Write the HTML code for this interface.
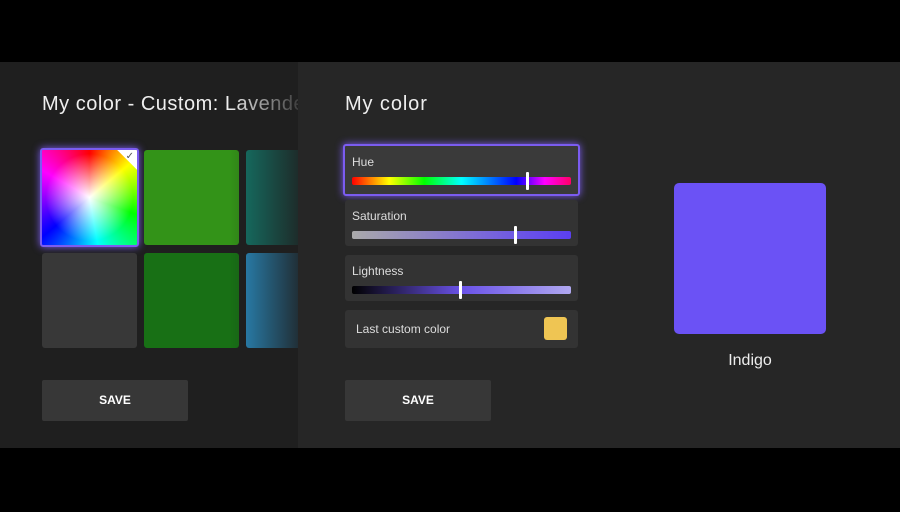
<html><head><style>
body{margin:0;width:900px;height:512px;background:#000;position:relative;overflow:hidden;font-family:"Liberation Sans","DejaVu Sans",sans-serif;color:#eee}
.a{position:absolute}
.t{border-radius:3px}
.box{position:absolute;left:345px;width:233px;background:#333;border-radius:3px}
.box span{position:absolute;left:7px;top:9px;font-size:12px;color:#ddd}
.bar{position:absolute;left:7px;right:7px;height:8px;border-radius:2px}
.th{position:absolute;width:3px;height:18px;background:#fff;border-radius:1px}
.save{position:absolute;top:380px;width:146px;height:41px;background:#373737;border-radius:2px;font-size:12px;font-weight:bold;color:#fff;text-align:center;line-height:41px}
</style></head><body>
<div class="a" style="left:0;top:62px;width:900px;height:386px;background:#1f1f1f"></div>
<div class="a" style="left:42px;top:93px;font-size:20px;letter-spacing:0.5px;color:#eee;white-space:nowrap;width:256px;overflow:hidden">My color - Custom: Lavender</div>
<div class="a t" style="left:40px;top:148px;width:95px;height:95px;border:2px solid #7b5cf0;box-shadow:0 0 8px #7b5cf0;background:radial-gradient(circle at 50% 50%,#fff 0,rgba(255,255,255,0) 65%),conic-gradient(from 0deg at 50% 50%,#f00 0deg,#ff0 50deg,#0f0 110deg,#0ff 170deg,#00f 230deg,#f0f 300deg,#f00 360deg);overflow:hidden"><div class="a" style="right:-14px;top:-14px;width:28px;height:28px;background:#fff;transform:rotate(45deg)"></div><div class="a" style="right:3px;top:1px;font-size:10px;color:#555">✓</div></div>
<div class="a t" style="left:144px;top:150px;width:95px;height:95px;background:#339318"></div>
<div class="a t" style="left:246px;top:150px;width:60px;height:95px;background:#137a6c"></div>
<div class="a t" style="left:42px;top:253px;width:95px;height:95px;background:#383838"></div>
<div class="a t" style="left:144px;top:253px;width:95px;height:95px;background:#187015"></div>
<div class="a t" style="left:246px;top:253px;width:60px;height:95px;background:#2a8fc4"></div>
<div class="a" style="left:230px;top:62px;width:68px;height:386px;background:linear-gradient(90deg,rgba(31,31,31,0),rgba(31,31,31,.85))"></div>
<div class="save" style="left:42px">SAVE</div>
<div class="a" style="left:298px;top:62px;width:602px;height:386px;background:#262626"></div>
<div class="a" style="left:345px;top:93px;font-size:20px;letter-spacing:0.9px">My color</div>
<div class="box" style="top:144px;height:48px;border:2px solid #7b5cf0;left:343px;box-shadow:0 0 8px #7b5cf0;background:#3a3a3a"><span style="top:9px">Hue</span><div class="bar" style="top:31px;background:linear-gradient(90deg,#f00,#ff0 17%,#0f0 33%,#0ff 50%,#00f 75%,#f0f 88%,#f06)"></div><div class="th" style="left:181px;top:26px"></div></div>
<div class="box" style="top:200px;height:46px"><span>Saturation</span><div class="bar" style="top:31px;background:linear-gradient(90deg,#aaa,#6a52e8 80%,#5b3ff0)"></div><div class="th" style="left:169px;top:26px"></div></div>
<div class="box" style="top:255px;height:46px"><span>Lightness</span><div class="bar" style="top:31px;background:linear-gradient(90deg,#000,#6a52e8 50%,#b0a8f0)"></div><div class="th" style="left:114px;top:26px"></div></div>
<div class="box" style="top:310px;height:38px"><span style="left:11px;top:12px">Last custom color</span><div class="a" style="right:11px;top:7px;width:23px;height:23px;background:#efc553;border-radius:3px"></div></div>
<div class="save" style="left:345px">SAVE</div>
<div class="a" style="left:674px;top:183px;width:152px;height:151px;background:#6b52f5;border-radius:5px"></div>
<div class="a" style="left:674px;width:152px;top:352px;text-align:center;font-size:16px">Indigo</div>
</body></html>
